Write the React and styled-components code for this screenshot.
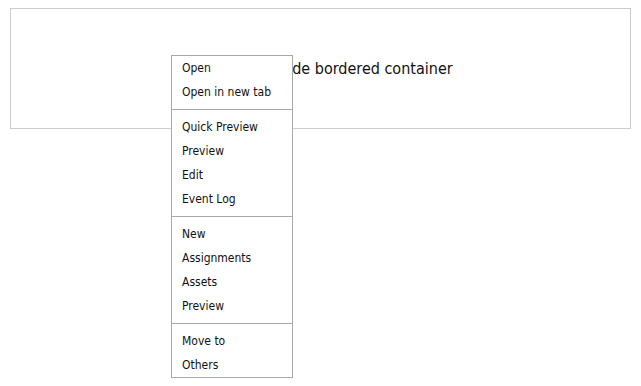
import React from "react";
import styled, { createGlobalStyle } from "styled-components";

const GlobalStyle = createGlobalStyle`
  html, body {
    height: 100%;
  }
  body {
    margin: 8px 10px;
    background: #fff;
    font-family: "DejaVu Sans", "Liberation Sans", sans-serif;
    font-stretch: condensed;
    color: #111;
  }
`;

const Page = styled.div`
  position: relative;
  min-height: 370px;
`;

const Bordered = styled.div`
  height: 119px;
  border: 1px solid #cccccc;
  display: flex;
  align-items: center;
  justify-content: center;
  font-size: 16px;
`;

const Menu = styled.ul`
  position: absolute;
  left: 161px;
  top: 47px;
  width: 120px;
  margin: 0;
  padding: 0;
  list-style: none;
  background: #fff;
  border: 1px solid #aaaaaa;
  font-size: 12px;
  z-index: 10;
`;

const Item = styled.li`
  height: 24px;
  line-height: 24px;
  padding: 0 10px;
  white-space: nowrap;
  cursor: default;
`;

const Separator = styled.li`
  height: 1px;
  margin: 5px 0;
  background: #aaaaaa;
`;

const groups = [
  ["Open", "Open in new tab"],
  ["Quick Preview", "Preview", "Edit", "Event Log"],
  ["New", "Assignments", "Assets", "Preview"],
  ["Move to", "Others"],
];

export default function App() {
  return (
    <Page>
      <GlobalStyle />
      <Bordered>Right click inside bordered container</Bordered>
      <Menu>
        {groups.map((group, gi) => (
          <React.Fragment key={gi}>
            {gi > 0 && <Separator />}
            {group.map((label) => (
              <Item key={label}>{label}</Item>
            ))}
          </React.Fragment>
        ))}
      </Menu>
    </Page>
  );
}
